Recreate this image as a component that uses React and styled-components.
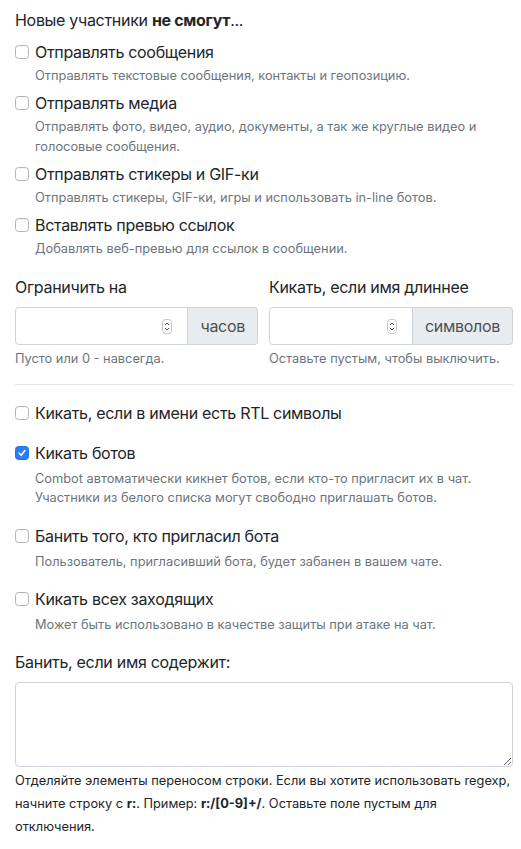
import styled, { createGlobalStyle } from 'styled-components';

const Global = createGlobalStyle`
  html, body { margin: 0; padding: 0; background: #fff; }
  body {
    font-family: Inter, "Liberation Sans", sans-serif;
    color: #212529;
    font-size: 16px;
    line-height: 1.5;
  }
  * { box-sizing: border-box; }
`;

const Page = styled.div`
  width: 521px;
  padding: 8px 8px 16px 15px;
`;

const Heading = styled.div`
  font-size: 16px;
  line-height: 24px;
  letter-spacing: -0.3px;
  margin-bottom: 8px;
  b { font-weight: 700; }
`;

const CheckItem = styled.div`
  margin-bottom: ${(p) => (p.$spaced ? '16px' : '0')};
`;

const CheckRow = styled.label`
  display: flex;
  align-items: center;
  gap: 6px;
  font-size: 16px;
  line-height: 24px;
  letter-spacing: -0.3px;
  cursor: pointer;
`;

const Box = styled.span`
  width: 14px;
  height: 14px;
  flex-shrink: 0;
  border-radius: 3.5px;
  border: 1px solid ${(p) => (p.$checked ? '#1f74e8' : '#b5b5b5')};
  background: ${(p) => (p.$checked ? '#2a7df2' : '#fff')};
  box-shadow: ${(p) => (p.$checked ? 'none' : 'inset 0 1px 1px rgba(0,0,0,0.04)')};
  display: flex;
  align-items: center;
  justify-content: center;
`;

const Desc = styled.div`
  margin-left: 20px;
  margin-top: ${(p) => (p.$tight ? '2px' : '4px')};
  margin-bottom: ${(p) => (p.$tight ? '5px' : '0')};
  font-size: 12.8px;
  line-height: ${(p) => (p.$tight ? '20px' : '19.2px')};
  color: #6c757d;
`;

const Columns = styled.div`
  display: grid;
  grid-template-columns: 243px 244px;
  column-gap: 11px;
  margin-top: 16px;
`;

const FieldLabel = styled.div`
  font-size: 16px;
  line-height: 24px;
  letter-spacing: -0.3px;
  margin-bottom: 8px;
`;

const InputGroup = styled.div`
  display: flex;
  height: 38px;
  min-width: 0;
`;

const NumberBox = styled.div`
  flex: 1 1 0;
  min-width: 0;
  display: flex;
  align-items: center;
  border: 1px solid #ced4da;
  border-radius: 4px 0 0 4px;
  padding: 0 15px 0 12px;
  background: #fff;
  input {
    flex: 1 1 0;
    width: 0;
    min-width: 0;
    border: 0;
    outline: none;
    font: inherit;
    background: transparent;
  }
`;

const Addon = styled.div`
  flex-shrink: 0;
  display: flex;
  align-items: center;
  padding: 0 12px;
  background: #e9ecef;
  border: 1px solid #ced4da;
  border-left: 0;
  border-radius: 0 4px 4px 0;
  color: #495057;
  font-size: 16px;
  letter-spacing: -0.3px;
`;

const Help = styled.div`
  margin-top: 4px;
  font-size: 12.8px;
  line-height: 19.2px;
  color: #6c757d;
`;

const Rule = styled.hr`
  border: 0;
  border-top: 1px solid rgba(0, 0, 0, 0.1);
  margin: 16px 0;
`;

const TextArea = styled.textarea`
  display: block;
  width: 100%;
  height: 85px;
  border: 1px solid #ced4da;
  border-radius: 4px;
  padding: 6px 12px;
  font: inherit;
  resize: vertical;
`;

const Note = styled.div`
  margin-top: 2px;
  font-size: 12.8px;
  line-height: 23px;
  color: #212529;
  b { font-weight: 700; }
`;

const Spinner = () => (
  <svg width="10" height="15" viewBox="0 0 10 15">
    <rect x="0.5" y="0.5" width="9" height="14" rx="3" fill="#fff" stroke="#c4c4c4" />
    <path d="M3 6 L5 4 L7 6" fill="none" stroke="#5a5a5a" strokeWidth="1" />
    <path d="M3 9 L5 11 L7 9" fill="none" stroke="#5a5a5a" strokeWidth="1" />
  </svg>
);

const Check = ({ checked }) => (
  <Box $checked={checked}>
    {checked && (
      <svg width="10" height="10" viewBox="0 0 10 10">
        <path d="M2.2 5.2 L4.2 7.3 L7.9 2.6" fill="none" stroke="#fff" strokeWidth="1.6" strokeLinecap="round" strokeLinejoin="round" />
      </svg>
    )}
  </Box>
);

const restrictions = [
  { label: 'Отправлять сообщения', desc: 'Отправлять текстовые сообщения, контакты и геопозицию.' },
  { label: 'Отправлять медиа', desc: 'Отправлять фото, видео, аудио, документы, а так же круглые видео и голосовые сообщения.' },
  { label: 'Отправлять стикеры и GIF-ки', desc: 'Отправлять стикеры, GIF-ки, игры и использовать in-line ботов.' },
  { label: 'Вставлять превью ссылок', desc: 'Добавлять веб-превью для ссылок в сообщении.' },
];

const options = [
  { label: 'Кикать, если в имени есть RTL символы' },
  { label: 'Кикать ботов', checked: true, desc: 'Combot автоматически кикнет ботов, если кто-то пригласит их в чат. Участники из белого списка могут свободно приглашать ботов.' },
  { label: 'Банить того, кто пригласил бота', desc: 'Пользователь, пригласивший бота, будет забанен в вашем чате.' },
  { label: 'Кикать всех заходящих', desc: 'Может быть использовано в качестве защиты при атаке на чат.' },
];

const limits = [
  { label: 'Ограничить на', unit: 'часов', help: 'Пусто или 0 - навсегда.' },
  { label: 'Кикать, если имя длиннее', unit: 'символов', help: 'Оставьте пустым, чтобы выключить.' },
];

export default function App() {
  return (
    <Page>
      <Global />
      <Heading>
        Новые участники <b>не смогут</b>...
      </Heading>
      {restrictions.map((r) => (
        <CheckItem key={r.label}>
          <CheckRow>
            <Check />
            {r.label}
          </CheckRow>
          <Desc $tight>{r.desc}</Desc>
        </CheckItem>
      ))}

      <Columns>
        {limits.map((l) => (
          <div key={l.label}>
            <FieldLabel>{l.label}</FieldLabel>
            <InputGroup>
              <NumberBox>
                <input type="text" />
                <Spinner />
              </NumberBox>
              <Addon>{l.unit}</Addon>
            </InputGroup>
            <Help>{l.help}</Help>
          </div>
        ))}
      </Columns>

      <Rule />

      {options.map((o) => (
        <CheckItem key={o.label} $spaced>
          <CheckRow>
            <Check checked={o.checked} />
            {o.label}
          </CheckRow>
          {o.desc && <Desc>{o.desc}</Desc>}
        </CheckItem>
      ))}

      <FieldLabel>Банить, если имя содержит:</FieldLabel>
      <TextArea rows={3} />
      <Note>
        Отделяйте элементы переносом строки. Если вы хотите использовать regexp, начните строку с <b>r:</b>. Пример:{' '}
        <b>r:/[0-9]+/</b>. Оставьте поле пустым для отключения.
      </Note>
    </Page>
  );
}
